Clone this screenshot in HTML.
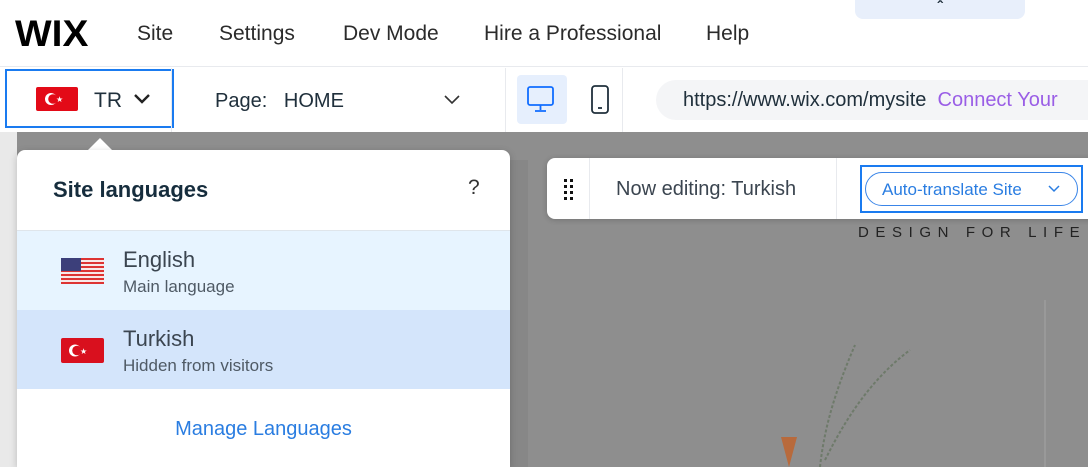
<!DOCTYPE html>
<html><head><style>
*{margin:0;padding:0;box-sizing:border-box}
html,body{width:1088px;height:467px;overflow:hidden}
body{position:relative;font-family:"Liberation Sans",sans-serif;background:#fff;color:#20303c}
.a{position:absolute;white-space:nowrap}
.nav{top:22px;font-size:21px;color:#2b2b2b}
</style></head><body>
<div class="a" style="left:0;top:0;width:1088px;height:67px;background:#fff;border-bottom:1px solid #e8eaee"></div>
<div class="a" style="left:15px;top:13px;font-size:37px;font-weight:bold;letter-spacing:0px;color:#000;transform:scaleX(1.05);transform-origin:left">WIX</div>
<div class="a nav" style="left:137px">Site</div>
<div class="a nav" style="left:219px">Settings</div>
<div class="a nav" style="left:343px">Dev Mode</div>
<div class="a nav" style="left:484px">Hire a Professional</div>
<div class="a nav" style="left:706px">Help</div>
<div class="a" style="left:855px;top:0;width:170px;height:19px;background:#e8effb;border-radius:0 0 8px 8px;text-align:center;font-size:16px;line-height:16px;font-weight:bold">&#710;</div>

<div class="a" style="left:0;top:68px;width:1088px;height:64px;background:#fff"></div>
<div class="a" style="left:5px;top:69px;width:169px;height:59px;border:2px solid #1a7bf0"></div>
<div class="a" style="left:36px;top:87px;width:42px;height:24px;background:#e30a17;border-radius:2px"></div>
<svg class="a" style="left:36px;top:87px" width="42" height="24"><circle cx="15" cy="12" r="6" fill="#fff"/><circle cx="17" cy="12" r="4.8" fill="#e30a17"/><text x="20" y="15" font-size="8" fill="#fff">★</text></svg>
<div class="a" style="left:94px;top:89px;font-size:21px">TR</div>
<svg class="a" style="left:133px;top:93px" width="18" height="12"><path d="M2 2l7 7 7-7" stroke="#222" stroke-width="2.4" fill="none"/></svg>
<div class="a" style="left:171px;top:68px;width:1px;height:64px;background:#e8eaee"></div>
<div class="a" style="left:215px;top:90px;font-size:20px">Page:&nbsp;&nbsp;&nbsp;HOME</div>
<svg class="a" style="left:443px;top:94px" width="18" height="12"><path d="M2 2l7 7 7-7" stroke="#333" stroke-width="1.6" fill="none"/></svg>
<div class="a" style="left:505px;top:68px;width:1px;height:64px;background:#e8eaee"></div>
<div class="a" style="left:517px;top:75px;width:50px;height:49px;background:#e6effd;border-radius:4px"></div>
<svg class="a" style="left:525px;top:84px" width="32" height="30"><rect x="3" y="3" width="25" height="18" rx="2" stroke="#116dff" stroke-width="1.8" fill="none"/><path d="M15.5 21v5M10 27h11" stroke="#116dff" stroke-width="1.8"/></svg>
<svg class="a" style="left:588px;top:84px" width="24" height="32"><rect x="4" y="2" width="16" height="27" rx="3" stroke="#20303c" stroke-width="1.8" fill="none"/><path d="M10 24h4" stroke="#20303c" stroke-width="1.8"/></svg>
<div class="a" style="left:622px;top:68px;width:1px;height:64px;background:#e8eaee"></div>
<div class="a" style="left:656px;top:80px;width:460px;height:40px;background:#f4f5f7;border-radius:20px"></div>
<div class="a" style="left:683px;top:89px;font-size:20px">https://www.wix.com/mysite&nbsp;&nbsp;<span style="color:#9a5ee6">Connect Your</span></div>

<div class="a" style="left:0;top:132px;width:1088px;height:335px;background:#8e8e8e"></div>
<div class="a" style="left:0;top:132px;width:17px;height:335px;background:#e9e9e9"></div>
<div class="a" style="left:510px;top:160px;width:18px;height:307px;background:#878787"></div>
<div class="a" style="left:1044px;top:300px;width:48px;height:167px;border-left:2px solid #999"></div>
<div class="a" style="left:858px;top:224px;font-size:15px;letter-spacing:6.6px;color:#222">DESIGN FOR LIFE</div>
<svg class="a" style="left:770px;top:340px" width="150" height="127"><polygon points="11,0 27,0 19,30" transform="translate(0,97)" fill="#b86a3c"/><path d="M50 127C55 80 70 40 85 5M55 120C75 80 100 40 140 10" stroke="#6e7a6a" stroke-width="2" fill="none" stroke-dasharray="3 2"/></svg>

<div class="a" style="left:88px;top:138px;width:0;height:0;border-left:12px solid transparent;border-right:12px solid transparent;border-bottom:12px solid #fff"></div>
<div class="a" style="left:17px;top:150px;width:493px;height:317px;background:#fff;border-radius:8px 8px 0 0;overflow:hidden;box-shadow:0 2px 8px rgba(0,0,0,.2)">
 <div class="a" style="left:36px;top:27px;font-size:22px;font-weight:bold;color:#162d3d">Site languages</div>
 <div class="a" style="left:451px;top:26px;font-size:21px;color:#333">?</div>
 <div class="a" style="left:0;top:80px;width:493px;height:1px;background:#dfe5eb"></div>
 <div class="a" style="left:0;top:81px;width:493px;height:79px;background:#e7f4ff"></div>
 <div class="a" style="left:0;top:160px;width:493px;height:79px;background:#d4e5fb"></div>
 <svg class="a" style="left:44px;top:108px" width="43" height="26"><g fill="#d33"><rect y="0" width="43" height="2"/><rect y="4" width="43" height="2"/><rect y="8" width="43" height="2"/><rect y="12" width="43" height="2"/><rect y="16" width="43" height="2"/><rect y="20" width="43" height="2"/><rect y="24" width="43" height="2"/></g><g fill="#f7e8e8"><rect y="2" width="43" height="2"/><rect y="6" width="43" height="2"/><rect y="10" width="43" height="2"/><rect y="14" width="43" height="2"/><rect y="18" width="43" height="2"/><rect y="22" width="43" height="2"/></g><rect width="20" height="13" fill="#3c3f7a"/></svg>
 <div class="a" style="left:106px;top:97px;font-size:22px;color:#3b4550">English</div>
 <div class="a" style="left:106px;top:127px;font-size:17px;color:#4f5a65">Main language</div>
 <div class="a" style="left:44px;top:188px;width:43px;height:25px;background:#d9101e;border-radius:2px"></div>
 <svg class="a" style="left:44px;top:188px" width="43" height="25"><circle cx="14" cy="12.5" r="6" fill="#fff"/><circle cx="16" cy="12.5" r="4.8" fill="#d9101e"/><text x="19" y="16" font-size="8" fill="#fff">★</text></svg>
 <div class="a" style="left:106px;top:176px;font-size:22px;color:#3b4550">Turkish</div>
 <div class="a" style="left:106px;top:206px;font-size:17px;color:#4f5a65">Hidden from visitors</div>
 <div class="a" style="left:0;top:268px;width:493px;text-align:center;font-size:20px;color:#2a7de1">Manage Languages</div>
</div>

<div class="a" style="left:547px;top:158px;width:560px;height:61px;background:#fff;border-radius:8px;box-shadow:0 1px 6px rgba(0,0,0,.2)"></div>
<svg class="a" style="left:563px;top:178px" width="12" height="24"><g fill="#111"><rect x="1" y="1" width="3" height="3"/><rect x="7" y="1" width="3" height="3"/><rect x="1" y="7" width="3" height="3"/><rect x="7" y="7" width="3" height="3"/><rect x="1" y="13" width="3" height="3"/><rect x="7" y="13" width="3" height="3"/><rect x="1" y="19" width="3" height="3"/><rect x="7" y="19" width="3" height="3"/></g></svg>
<div class="a" style="left:589px;top:158px;width:1px;height:61px;background:#e8eaee"></div>
<div class="a" style="left:616px;top:178px;font-size:20px;color:#3b4550">Now editing: Turkish</div>
<div class="a" style="left:836px;top:158px;width:1px;height:61px;background:#e8eaee"></div>
<div class="a" style="left:860px;top:165px;width:223px;height:48px;border:2px solid #1a7bf0"></div>
<div class="a" style="left:865px;top:172px;width:213px;height:34px;border:1px solid #3a85e8;border-radius:17px"></div>
<div class="a" style="left:882px;top:180px;font-size:17px;color:#2a7de1">Auto-translate Site</div>
<svg class="a" style="left:1047px;top:184px" width="14" height="10"><path d="M2 2l5 5 5-5" stroke="#2a7de1" stroke-width="1.5" fill="none"/></svg>
</body></html>
